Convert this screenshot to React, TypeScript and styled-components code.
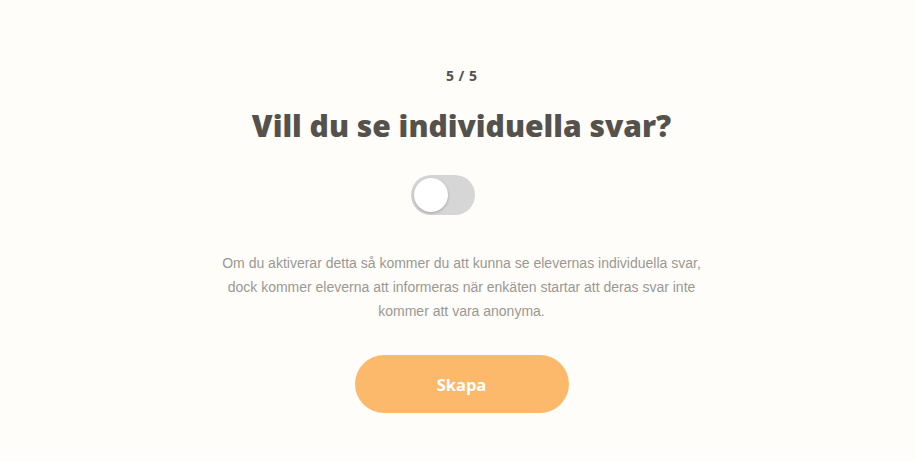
import React, { useState } from "react";
import styled, { createGlobalStyle } from "styled-components";

const Global = createGlobalStyle`
  html, body { margin: 0; padding: 0; background: #fffdf9; }
  #root { min-height: 461px; }
`;

const Page = styled.main`
  min-height: 461px;
  box-sizing: border-box;
  padding: 66px 0 0 8px;
  display: flex;
  flex-direction: column;
  align-items: center;
  background: #fffdf9;
`;

const Step = styled.div`
  font-family: "Open Sans", sans-serif;
  font-weight: 700;
  font-size: 14px;
  line-height: 20px;
  color: #55524e;
  word-spacing: 1px;
`;

const Title = styled.h1`
  margin: 20px 0 0;
  font-family: "Open Sans", sans-serif;
  font-weight: 800;
  font-size: 30px;
  line-height: 40px;
  color: #55524e;
`;

const Track = styled.button<{ $on: boolean }>`
  margin: 29px 38px 0 0;
  box-sizing: border-box;
  width: 64px;
  height: 40px;
  border: none;
  border-radius: 20px;
  padding: 3px;
  background: ${(p) => (p.$on ? "#fdb96b" : "#d6d6d6")};
  display: flex;
  justify-content: ${(p) => (p.$on ? "flex-end" : "flex-start")};
  align-items: center;
  cursor: pointer;
`;

const Knob = styled.span`
  width: 34px;
  height: 34px;
  border-radius: 50%;
  background: #ffffff;
  box-shadow: 0 1px 3px rgba(0, 0, 0, 0.25);
`;

const Desc = styled.p`
  margin: 36px 0 0;
  width: 504px;
  text-align: center;
  font-family: "Liberation Sans", Arial, sans-serif;
  font-size: 14px;
  line-height: 24px;
  color: #9a9895;
`;

const Button = styled.button`
  margin-top: 32px;
  width: 214px;
  height: 58px;
  border: none;
  border-radius: 29px;
  background: #fdb96b;
  color: #ffffff;
  font-family: "Open Sans", sans-serif;
  font-weight: 700;
  font-size: 16.5px;
  cursor: pointer;
`;

export default function App() {
  const [on, setOn] = useState(false);
  return (
    <>
      <Global />
      <Page>
        <Step>5 / 5</Step>
        <Title>Vill du se individuella svar?</Title>
        <Track $on={on} onClick={() => setOn(!on)} aria-pressed={on}>
          <Knob />
        </Track>
        <Desc>
          Om du aktiverar detta så kommer du att kunna se elevernas individuella svar,
          dock kommer eleverna att informeras när enkäten startar att deras svar inte
          kommer att vara anonyma.
        </Desc>
        <Button>Skapa</Button>
      </Page>
    </>
  );
}
